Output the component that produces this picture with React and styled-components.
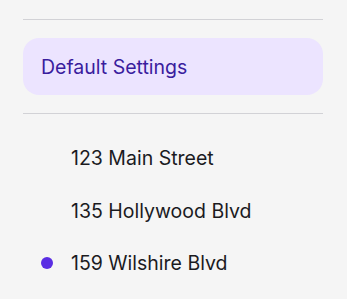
import React from 'react';
import styled, { createGlobalStyle } from 'styled-components';

const GlobalStyle = createGlobalStyle`
  html, body {
    margin: 0;
    padding: 0;
    background: #f5f5f5;
    font-family: Inter, "Noto Sans", sans-serif;
  }
`;

const Panel = styled.div`
  padding: 19px 24px 0 23px;
`;

const Divider = styled.hr`
  margin: 0;
  border: none;
  height: 1px;
  background: #d2d2d6;
`;

const SettingsCard = styled.div`
  margin: 18px 0;
  height: 57px;
  border-radius: 16px;
  background: #ece4ff;
  display: flex;
  align-items: center;
  padding-left: 18px;
  color: #3a1d9e;
  font-size: 19.5px;
`;

const AddressList = styled.ul`
  list-style: none;
  margin: 0;
  padding: 18px 0 0;
`;

const AddressRow = styled.li`
  height: 52.5px;
  display: flex;
  align-items: center;
  color: #1b1b1f;
  font-size: 19.5px;
`;

const DotSlot = styled.span`
  width: 48px;
  display: flex;
  align-items: center;
  padding-left: 18px;
  box-sizing: border-box;
`;

const Dot = styled.span`
  width: 12px;
  height: 12px;
  border-radius: 50%;
  background: ${p => (p.$active ? '#5a2de3' : 'transparent')};
`;

const addresses = [
  { label: '123 Main Street', active: false },
  { label: '135 Hollywood Blvd', active: false },
  { label: '159 Wilshire Blvd', active: true },
];

export default function App() {
  return (
    <>
      <GlobalStyle />
      <Panel>
        <Divider />
        <SettingsCard>Default Settings</SettingsCard>
        <Divider />
        <AddressList>
          {addresses.map(a => (
            <AddressRow key={a.label}>
              <DotSlot>
                <Dot $active={a.active} />
              </DotSlot>
              {a.label}
            </AddressRow>
          ))}
        </AddressList>
      </Panel>
    </>
  );
}
